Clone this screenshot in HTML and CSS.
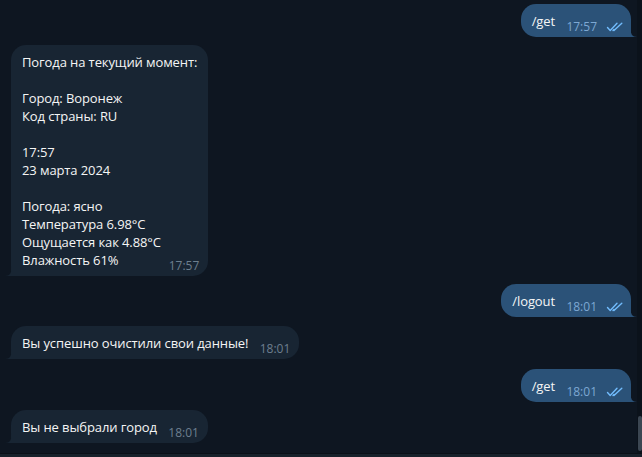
FILE: index.html
```html
<!DOCTYPE html>
<html lang="ru">
<head>
<meta charset="utf-8">
<title>Chat</title>
<link rel="stylesheet" href="styles.css">
</head>
<body>
<div class="app">
  <main class="chat">
    <div class="msg out">
      <span class="text">/get</span><span class="spacer out-spacer"></span>
      <span class="meta"><span class="time">17:57</span><svg class="checks" viewBox="0 0 20 10" width="20" height="10"><path d="M1.5 5.5 L4.2 8.4 L11 1.3 M7 8.4 L8 7.4 M8 8.4 L15.8 1.3" fill="none" stroke="currentColor" stroke-width="1.4" stroke-linecap="round" stroke-linejoin="round"/></svg></span>
      <svg class="tail tail-out" viewBox="0 0 7 10" width="7" height="10"><path d="M0 0 Q0 10 7 10 L0 10 Z"/></svg>
    </div>

    <div class="msg in">
      <div class="line">Погода на текущий момент:</div>
      <div class="blank"></div>
      <div class="line">Город: Воронеж</div>
      <div class="line">Код страны: RU</div>
      <div class="blank"></div>
      <div class="line">17:57</div>
      <div class="line">23 марта 2024</div>
      <div class="blank"></div>
      <div class="line">Погода: ясно</div>
      <div class="line">Температура 6.98°C</div>
      <div class="line">Ощущается как 4.88°C</div>
      <div><span class="text">Влажность 61%</span><span class="spacer in-spacer"></span></div>
      <span class="meta"><span class="time">17:57</span></span>
      <svg class="tail tail-in" viewBox="0 0 7 10" width="7" height="10"><path d="M7 0 Q7 10 0 10 L7 10 Z"/></svg>
    </div>

    <div class="msg out">
      <span class="text">/logout</span><span class="spacer out-spacer"></span>
      <span class="meta"><span class="time">18:01</span><svg class="checks" viewBox="0 0 20 10" width="20" height="10"><path d="M1.5 5.5 L4.2 8.4 L11 1.3 M7 8.4 L8 7.4 M8 8.4 L15.8 1.3" fill="none" stroke="currentColor" stroke-width="1.4" stroke-linecap="round" stroke-linejoin="round"/></svg></span>
      <svg class="tail tail-out" viewBox="0 0 7 10" width="7" height="10"><path d="M0 0 Q0 10 7 10 L0 10 Z"/></svg>
    </div>

    <div class="msg in spaced">
      <span class="text">Вы успешно очистили свои данные!</span><span class="spacer in-spacer"></span>
      <span class="meta"><span class="time">18:01</span></span>
      <svg class="tail tail-in" viewBox="0 0 7 10" width="7" height="10"><path d="M7 0 Q7 10 0 10 L7 10 Z"/></svg>
    </div>

    <div class="msg out spaced-lg">
      <span class="text">/get</span><span class="spacer out-spacer"></span>
      <span class="meta"><span class="time">18:01</span><svg class="checks" viewBox="0 0 20 10" width="20" height="10"><path d="M1.5 5.5 L4.2 8.4 L11 1.3 M7 8.4 L8 7.4 M8 8.4 L15.8 1.3" fill="none" stroke="currentColor" stroke-width="1.4" stroke-linecap="round" stroke-linejoin="round"/></svg></span>
      <svg class="tail tail-out" viewBox="0 0 7 10" width="7" height="10"><path d="M0 0 Q0 10 7 10 L0 10 Z"/></svg>
    </div>

    <div class="msg in">
      <span class="text">Вы не выбрали город</span><span class="spacer in-spacer"></span>
      <span class="meta"><span class="time">18:01</span></span>
      <svg class="tail tail-in" viewBox="0 0 7 10" width="7" height="10"><path d="M7 0 Q7 10 0 10 L7 10 Z"/></svg>
    </div>
  </main>
  <div class="scroll"><div class="thumb"></div></div>
  <div class="footer"></div>
</div>
</body>
</html>
```

FILE: styles.css
```css
* { box-sizing: border-box; }
html, body { margin: 0; padding: 0; }
body {
  background: #0e1621;
  font-family: "Open Sans", "Noto Sans", sans-serif;
  font-size: 13px;
  letter-spacing: -0.1px;
  color: #f5f5f5;
  overflow: hidden;
}
.app {
  width: 642px;
  height: 457px;
  display: grid;
  grid-template-columns: 1fr 5px;
  grid-template-rows: 1fr 4px;
}
.chat {
  display: flex;
  flex-direction: column;
  gap: 8px;
  padding: 4px 6px 0 11px;
  overflow: hidden;
}
.msg {
  position: relative;
  max-width: 420px;
  padding: 8px 11px 7px 11px;
  line-height: 18px;
  border-radius: 15px;
}
.line { white-space: nowrap; }
.blank { height: 18px; }
.spacer { display: inline-block; height: 1px; }
.in-spacer { width: 40px; }
.out-spacer { width: 71px; }
.in {
  align-self: flex-start;
  background: #182533;
  border-bottom-left-radius: 0;
}
.out {
  align-self: flex-end;
  background: #2b5278;
  border-bottom-right-radius: 0;
  padding-right: 5px;
}
.spaced { margin-top: 1px; }
.spaced-lg { margin-top: 2px; }
.meta {
  position: absolute;
  bottom: 3px;
  right: 9px;
  display: flex;
  align-items: center;
  gap: 9px;
  line-height: 14px;
  letter-spacing: 0;
}
.out .meta { right: 5px; }
.time { font-size: 12px; color: #6d7f8f; }
.out .time { color: #7da8d3; }
.checks { color: #72bcfd; display: block; margin-top: -1px; }
.tail { position: absolute; bottom: 0; display: block; }
.tail-in { left: -6px; fill: #182533; }
.tail-out { right: -6px; fill: #2b5278; }
.scroll {
  background: #0b121b;
  position: relative;
}
.thumb {
  position: absolute;
  left: 1px;
  right: 0;
  bottom: 2px;
  height: 35px;
  background: #3b4652;
  border-radius: 2px;
}
.footer {
  grid-column: 1 / 3;
  background: #17212b;
  border-top: 1px solid #0a1018;
}
```
